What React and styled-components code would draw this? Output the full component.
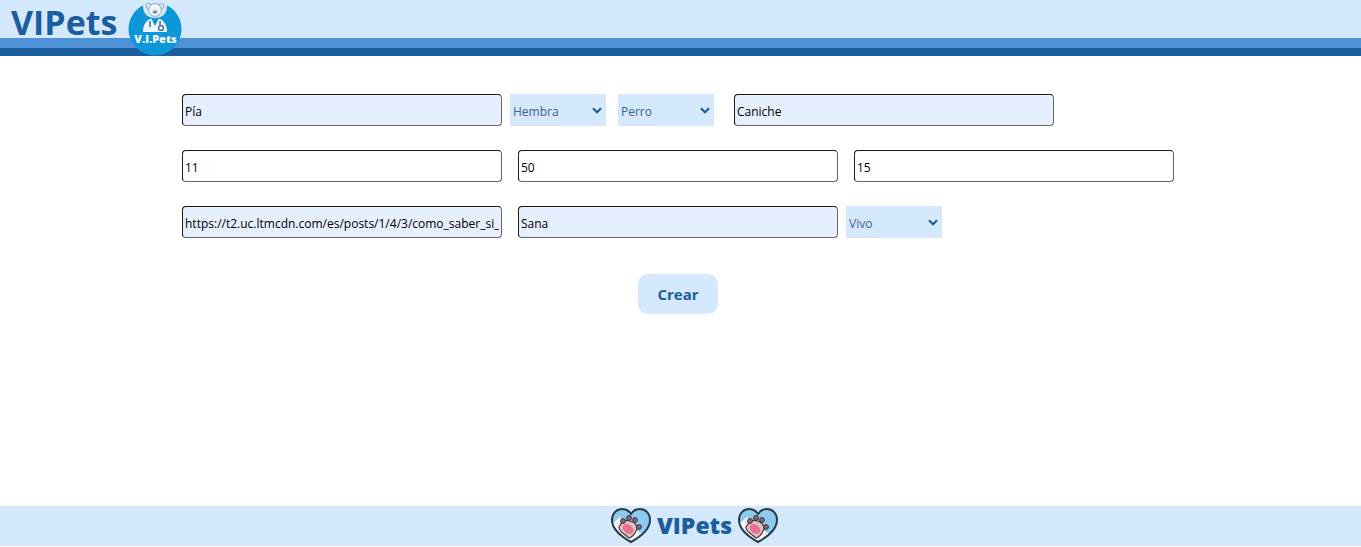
import React from "react";
import styled, { createGlobalStyle } from "styled-components";

const Global = createGlobalStyle`
  html, body {
    margin: 0;
    padding: 0;
    background: #fff;
    font-family: "Open Sans", "Noto Sans", sans-serif;
  }
`;

const Page = styled.div`
  display: flex;
  flex-direction: column;
  height: 547px;
  overflow: hidden;
`;

const Header = styled.header`
  position: relative;
  flex: none;
  height: 56px;
  background: #d4e9fe;
  display: flex;
  flex-direction: column;
  justify-content: flex-end;
`;

const BrandRow = styled.div`
  position: absolute;
  top: 0;
  left: 11px;
  display: flex;
  align-items: flex-start;
  gap: 11px;
`;

const Brand = styled.div`
  font-family: "Open Sans", sans-serif;
  font-weight: 700;
  font-size: 34px;
  line-height: 44px;
  color: #1b5e9f;
`;

const StripeMid = styled.div`
  height: 10px;
  background: #4f92d6;
`;

const StripeDark = styled.div`
  height: 8px;
  background: #1b5e9f;
`;

const Main = styled.main`
  flex: 1;
  padding: 38px 0 0 174px;
`;

const Row = styled.div`
  display: flex;
  align-items: flex-start;
  height: 32px;
  margin-bottom: 24px;
`;

const Field = styled.input`
  box-sizing: border-box;
  width: 320px;
  height: 32px;
  margin: 0 8px;
  padding: 2px 2px 0;
  border: 1px solid #1a1a1a;
  border-bottom-color: #666;
  border-right-color: #666;
  border-radius: 4px;
  background: ${(props) => (props.$filled ? "#e6effd" : "#fff")};
  font-family: "Open Sans", sans-serif;
  font-size: 12px;
  color: #000;
  outline: none;
`;

const SelectBox = styled.div`
  width: 96px;
  height: 32px;
  margin-right: ${(props) => props.$right || 0}px;
  background: #d4e9fe;
  display: flex;
  align-items: center;
  justify-content: space-between;
  padding: 2px 4px 0 3px;
  box-sizing: border-box;
  font-size: 12px;
  color: #3a6494;
  svg {
    margin-top: -2px;
  }
`;

const Actions = styled.div`
  display: flex;
  justify-content: center;
  width: 1008px;
  margin-top: 36px;
`;

const CreateButton = styled.button`
  width: 80px;
  height: 40px;
  border: none;
  border-radius: 10px;
  background: #d4e9fe;
  color: #1b5e9f;
  font-family: "Open Sans", sans-serif;
  font-weight: 700;
  font-size: 15px;
`;

const Footer = styled.footer`
  flex: none;
  height: 40px;
  margin-bottom: 1px;
  background: #d4e9fe;
  display: flex;
  align-items: center;
  justify-content: center;
  gap: 5px;
  padding-left: 28px;
`;

const FooterBrand = styled.span`
  font-weight: 800;
  font-size: 23px;
  margin-top: -2px;
  color: #1b5e9f;
`;

const Chevron = () => (
  <svg width="10" height="7" viewBox="0 0 10 7">
    <path d="M1 1.2 5 5.2l4-4" fill="none" stroke="#1b5e9f" strokeWidth="2.2" />
  </svg>
);

const Select = ({ value, right }) => (
  <SelectBox $right={right}>
    {value}
    <Chevron />
  </SelectBox>
);

const BearLogo = () => (
  <svg width="54" height="54" viewBox="0 0 54 54" style={{ marginTop: 2 }}>
    <circle cx="27" cy="27" r="26.5" fill="#0d96d8" />
    <path d="M15 -2h24v6c0 8-5 12-12 12s-12-4-12-12z" fill="#d4e9fe" />
    <circle cx="20.5" cy="4" r="2.6" fill="#d4e9fe" stroke="#8fa6ba" />
    <circle cx="33.5" cy="4" r="2.6" fill="#d4e9fe" stroke="#8fa6ba" />
    <circle cx="27" cy="8" r="6.4" fill="#eef6fd" stroke="#8fa6ba" />
    <ellipse cx="27" cy="10" rx="2.4" ry="1.8" fill="#7d8fa2" />
    <path d="M15 30c0-9 5-14 12-14s12 5 12 14z" fill="#eef6fd" />
    <path d="M23 16l4 8 4-8" fill="#0d96d8" />
    <path d="M22 19v6M32 19v4" stroke="#1b5e9f" strokeWidth="1.3" fill="none" />
    <circle cx="33" cy="26" r="2.4" fill="none" stroke="#1b5e9f" strokeWidth="1.2" />
    <text x="27.5" y="41" textAnchor="middle" fontFamily="Open Sans, sans-serif" fontWeight="800" fontSize="11" fill="#f4fbff">V.I.Pets</text>
  </svg>
);

const HEART = "M21 35C10 29 2 22 2 13 2 6 7 2 12 2c4 0 7 2 9 5 2-3 5-5 9-5 5 0 10 4 10 11 0 9-8 16-19 22z";

const PawHeart = () => (
  <svg width="42" height="38" viewBox="0 0 42 38">
    <defs>
      <clipPath id="heartClip">
        <path d={HEART} />
      </clipPath>
    </defs>
    <path d={HEART} fill="#8ccbef" />
    <polygon points="2,17 10,10 33,28 21,38" fill="#f3f5f7" clipPath="url(#heartClip)" />
    <path d={HEART} fill="none" stroke="#2b3a46" strokeWidth="2" />
    <path d="M9 20c2-5 7-8 11-6 4 1 7 4 7 8-2 4-3 8-8 9l-5-4c-3-2-5-4-5-7z" fill="#d9c3c6" stroke="#4b3c44" strokeWidth="1.2" />
    <ellipse cx="18" cy="22" rx="6" ry="4.4" fill="#ec6f8c" transform="rotate(40 18 22)" />
    <circle cx="13" cy="14" r="2.4" fill="#8d6a72" stroke="#3a2f36" />
    <circle cx="19" cy="11" r="2.4" fill="#8d6a72" stroke="#3a2f36" />
    <circle cx="25" cy="13" r="2.4" fill="#8d6a72" stroke="#3a2f36" />
    <circle cx="29" cy="20" r="2.4" fill="#8d6a72" stroke="#3a2f36" />
  </svg>
);

export default function App() {
  return (
    <>
      <Global />
      <Page>
        <Header>
          <BrandRow>
            <Brand>VIPets</Brand>
            <BearLogo />
          </BrandRow>
          <StripeMid />
          <StripeDark />
        </Header>
        <Main>
          <Row>
            <Field $filled defaultValue="Pía" />
            <Select value="Hembra" right={12} />
            <Select value="Perro" right={12} />
            <Field $filled defaultValue="Caniche" />
          </Row>
          <Row>
            <Field defaultValue="11" />
            <Field defaultValue="50" />
            <Field defaultValue="15" />
          </Row>
          <Row>
            <Field $filled defaultValue="https://t2.uc.ltmcdn.com/es/posts/1/4/3/como_saber_si_mi_perro_esta_sano.jpg" />
            <Field $filled defaultValue="Sana" />
            <Select value="Vivo" />
          </Row>
          <Actions>
            <CreateButton>Crear</CreateButton>
          </Actions>
        </Main>
        <Footer>
          <PawHeart />
          <FooterBrand>VIPets</FooterBrand>
          <PawHeart />
        </Footer>
      </Page>
    </>
  );
}
